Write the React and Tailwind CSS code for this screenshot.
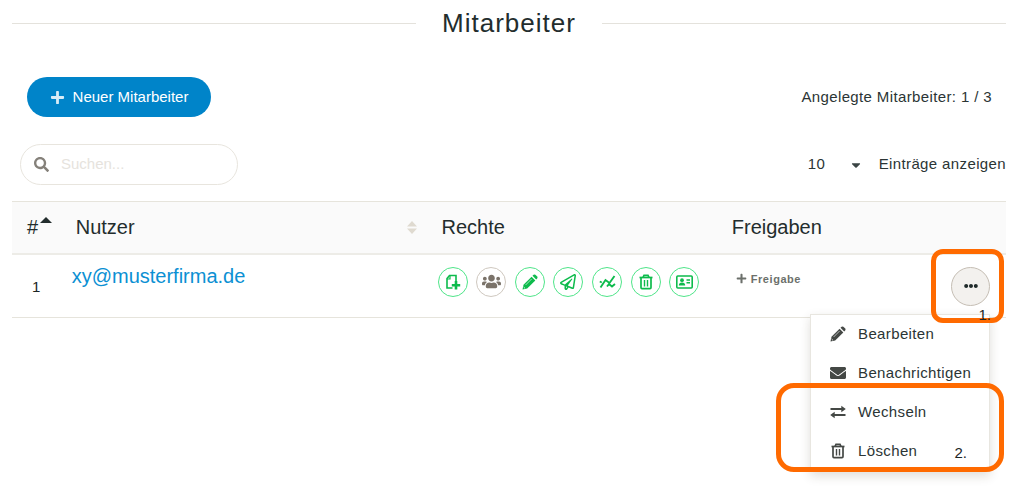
import { useState } from "react";
import {
    FaPlus,
    FaSearch,
    FaUsers,
    FaRegPaperPlane,
    FaEnvelope,
    FaCaretDown,
    FaEllipsisH,
} from "react-icons/fa";

function PencilIcon() {
    return (
        <svg width="16" height="16" viewBox="0 0 16 16" fill="currentColor">
            <path d="M0.5 15.5L1.5 10.8L9.6 2.7L13.3 6.4L5.2 14.5Z" />
            <path d="M10.5 1.8L11.6 0.8Q12.5 0 13.4 0.8L15.2 2.6Q16 3.5 15.2 4.4L14.2 5.5Z" />
            <path d="M3.6 11L9.6 5" stroke="#fff" strokeWidth="0.6" />
            <path d="M1.6 13L3 14.4" stroke="#fff" strokeWidth="0.8" />
        </svg>
    );
}

function FilePlusIcon() {
    return (
        <svg width="16" height="16" viewBox="0 0 16 16" fill="none" stroke="currentColor" strokeWidth="1.6">
            <path d="M7.5 14H2V4.5L4.5 1.5H11V7" />
            <path d="M5 1.5V5H2" strokeWidth="1.2" />
            <path d="M11 7V15.5M6.8 11.2H15.2" strokeWidth="2.6" />
        </svg>
    );
}

function ChartIcon() {
    return (
        <svg width="17" height="16" viewBox="0 0 17 16" fill="none" stroke="currentColor" strokeWidth="1.9">
            <path d="M1.5 13.5L6.5 6L10.5 9L15.5 2" />
            <path d="M8 12.5L10 10L13 12.5L16 10" />
            <path d="M0.8 7.5L2.8 8.5" />
        </svg>
    );
}

function TrashIcon() {
    return (
        <svg width="16" height="16" viewBox="0 0 16 16" fill="none" stroke="currentColor" strokeWidth="1.7">
            <path d="M1.5 3.5H14.5" />
            <path d="M5 3.5L6 1.3H10L11 3.5" />
            <path d="M3 4V13.5Q3 14.6 4 14.6H12Q13 14.6 13 13.5V4" />
            <path d="M6.5 6V12.5M9.5 6V12.5" strokeWidth="1.4" />
        </svg>
    );
}

function CardIcon() {
    return (
        <svg width="17" height="14" viewBox="0 0 17 14" fill="none" stroke="currentColor" strokeWidth="1.6">
            <rect x="0.8" y="1" width="15.4" height="12" rx="1" />
            <circle cx="6" cy="5.2" r="1.9" fill="currentColor" stroke="none" />
            <path d="M2.8 10.5C2.8 8.5 4 7.5 6 7.5S9.2 8.5 9.2 10.5Z" fill="currentColor" stroke="none" />
            <path d="M10.5 5H14M10.5 7.8H14" />
        </svg>
    );
}

function SwapIcon() {
    return (
        <svg width="16" height="14" viewBox="0 0 16 14" fill="currentColor">
            <path d="M0.5 3H11.3V0.7L15.8 4L11.3 7.3V5H0.5Z" />
            <path d="M15.5 9H4.7V6.7L0.2 10L4.7 13.3V11H15.5Z" />
        </svg>
    );
}

const rights = [
    { label: "Dokument anlegen", icon: <FilePlusIcon />, active: true },
    { label: "Mitarbeiter", icon: <FaUsers size={19} />, active: false },
    { label: "Bearbeiten", icon: <PencilIcon />, active: true },
    { label: "Senden", icon: <FaRegPaperPlane size={16} />, active: true },
    { label: "Statistik", icon: <ChartIcon />, active: true },
    { label: "Löschen", icon: <TrashIcon />, active: true },
    { label: "Visitenkarte", icon: <CardIcon />, active: true },
];

const menuItems = [
    { label: "Bearbeiten", icon: <PencilIcon /> },
    { label: "Benachrichtigen", icon: <FaEnvelope size={16} /> },
    { label: "Wechseln", icon: <SwapIcon /> },
    { label: "Löschen", icon: <TrashIcon /> },
];

function ActionMenu() {
    const [open, setOpen] = useState(true);

    return (
        <div className="relative w-[39px]">
            <button
                type="button"
                aria-label="Aktionen"
                onClick={() => setOpen(!open)}
                className="flex size-[39px] items-center justify-center rounded-full border border-[#c5beb4] bg-[#f3f1ee] text-[#1f2a2a]"
            >
                <FaEllipsisH size={14} />
            </button>

            {open && (
                <div className="absolute top-[47px] right-0 w-[180px] border border-[#e8e6e0] bg-white shadow-[0_4px_10px_rgba(60,50,30,0.16)]">
                    {menuItems.map((item) => (
                        <button
                            key={item.label}
                            type="button"
                            className="flex h-[39px] w-full items-center gap-3 pl-[18px] text-[15px] tracking-wide text-[#2b3535]"
                        >
                            <span className="flex w-[17px] justify-center text-[#444845]">{item.icon}</span>
                            {item.label}
                        </button>
                    ))}
                    <div className="pointer-events-none absolute top-[68px] -right-[15px] -bottom-px -left-[35px] rounded-[18px] border-5 border-[#ff6a00]">
                        <span className="absolute right-8 bottom-1 text-[15px] leading-5 text-[#1c2626]">2.</span>
                    </div>
                </div>
            )}

            {/* Step marker around the button */}
            <div className="pointer-events-none absolute -top-[18px] -right-[14px] -bottom-[17px] -left-[20px] rounded-xl border-5 border-[#ff6a00]">
                <span className="absolute right-2 -bottom-[7px] text-[15px] leading-5 text-[#1c2626]">1.</span>
            </div>
        </div>
    );
}

function App() {
    return (
        <main className="min-h-screen bg-white pr-[18px] pb-6 pl-3 font-['Liberation_Sans',Arial,sans-serif] text-[15px] text-[#2b3535]">
            <div className="flex h-[46px] items-center gap-[26px]">
                <hr className="flex-1 border-[#e4e2dc]" />
                <h1 className="text-[26px] tracking-[1px] text-[#232d2d]">Mitarbeiter</h1>
                <hr className="flex-1 border-[#e4e2dc]" />
            </div>

            <div className="mt-[31px] flex items-center justify-between pr-3.5 pl-[15px]">
                <button
                    type="button"
                    className="flex h-10 w-[184px] items-center justify-center gap-2 rounded-full bg-[#0084c9] text-white"
                >
                    <FaPlus size={15} className="text-[#d8ecf7]" />
                    Neuer Mitarbeiter
                </button>
                <p className="tracking-wide">Angelegte Mitarbeiter: 1 / 3</p>
            </div>

            <div className="mt-[27px] flex items-center justify-between pl-2">
                <label className="flex h-[41px] w-[218px] items-center gap-3 rounded-full border border-[#e8e5de] px-[13px]">
                    <FaSearch size={15} className="shrink-0 text-[#85817a]" />
                    <input
                        type="search"
                        aria-label="Suchen"
                        placeholder="Suchen..."
                        className="w-full min-w-0 outline-none placeholder:text-[#e6e3dd]"
                    />
                </label>
                <label className="flex items-center gap-4 tracking-wide">
                    <span className="relative flex items-center">
                        <select defaultValue="10" className="w-[55px] appearance-none outline-none">
                            <option>10</option>
                            <option>25</option>
                            <option>50</option>
                        </select>
                        <FaCaretDown size={14} className="pointer-events-none absolute right-0 text-[#3a4444]" />
                    </span>
                    Einträge anzeigen
                </label>
            </div>

            <table className="mt-4 w-full table-fixed border-collapse text-left">
                <thead className="border-t border-b-2 border-t-[#e6e4dc] border-b-[#edece7] bg-[#fafafa] text-xl text-[#232d2d]">
                    <tr className="h-[52px]">
                        <th className="w-[5%] pl-[15px] font-normal">
                            <span className="flex items-start gap-0.5">
                                #
                                <svg width="12" height="6" viewBox="0 0 12 6" fill="currentColor" className="mt-1 shrink-0">
                                    <path d="M0 6L6 0L12 6Z" />
                                </svg>
                            </span>
                        </th>
                        <th className="w-[36%] pr-[3px] pl-3.5 font-normal">
                            <span className="flex items-center justify-between">
                                Nutzer
                                <svg width="10" height="13" viewBox="0 0 10 13" fill="#dfdad0">
                                    <path d="M0 5.5L5 0L10 5.5ZM0 7.5L5 13L10 7.5Z" />
                                </svg>
                            </span>
                        </th>
                        <th className="w-[29%] pl-[22px] font-normal">Rechte</th>
                        <th className="w-[23%] pl-6 font-normal">Freigaben</th>
                        <th aria-label="Aktionen" />
                    </tr>
                </thead>
                <tbody>
                    <tr className="h-16 border-b border-[#e6e4dc] align-top">
                        <td className="pt-[21px] pl-5 text-[#1c2626]">1</td>
                        <td className="pt-[7px] pl-2.5">
                            <a href="#" className="text-xl text-[#0b90d3]">
                                xy@musterfirma.de
                            </a>
                        </td>
                        <td className="pt-3 pl-[18px]">
                            <div className="flex w-[262px] justify-between">
                                {rights.map((right) => (
                                    <button
                                        key={right.label}
                                        type="button"
                                        title={right.label}
                                        className={`flex size-[30px] shrink-0 items-center justify-center rounded-full border ${right.active
                                                ? "border-[#4fe589] text-[#0dbb4c]"
                                                : "border-[#cfc8bf] text-[#7b736a]"
                                            }`}
                                    >
                                        {right.icon}
                                    </button>
                                ))}
                            </div>
                        </td>
                        <td className="pt-4 pl-7">
                            <button type="button" className="flex items-center gap-1 text-[11px] font-bold tracking-wider text-[#6c706b]">
                                <FaPlus size={11} />
                                Freigabe
                            </button>
                        </td>
                        <td className="pt-3">
                            <div className="flex justify-end pr-4">
                                <ActionMenu />
                            </div>
                        </td>
                    </tr>
                </tbody>
            </table>
        </main>
    );
}

export default App;
